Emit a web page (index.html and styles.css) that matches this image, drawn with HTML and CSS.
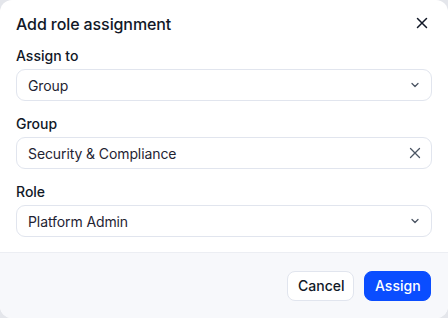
FILE: index.html
```html
<!DOCTYPE html>
<html lang="en">
<head>
  <meta charset="UTF-8" />
  <title>Add role assignment</title>
  <link rel="stylesheet" href="styles.css">
</head>
<body>

  <div class="dialog">
    <div class="dialog-body">
      <div class="dialog-header">
        <h2>Add role assignment</h2>
        <button class="icon-btn close" aria-label="Close">
          <svg width="12" height="12" viewBox="0 0 12 12"><path d="M1.5 1.5l9 9M10.5 1.5l-9 9" stroke="#111827" stroke-width="1.5" stroke-linecap="round"/></svg>
        </button>
      </div>

      <div class="field">
        <label>Assign to</label>
        <div class="control">
          <span>Group</span>
          <svg class="chev" width="12" height="12" viewBox="0 0 12 12"><path d="M3 4.5l3 3 3-3" fill="none" stroke="#4b5563" stroke-width="1.3" stroke-linecap="round" stroke-linejoin="round"/></svg>
        </div>
      </div>

      <div class="field">
        <label>Group</label>
        <div class="control">
          <span>Security &amp; Compliance</span>
          <svg class="clear" width="12" height="12" viewBox="0 0 12 12"><path d="M1.5 1.5l9 9M10.5 1.5l-9 9" stroke="#4b5563" stroke-width="1.3" stroke-linecap="round"/></svg>
        </div>
      </div>

      <div class="field">
        <label>Role</label>
        <div class="control">
          <span>Platform Admin</span>
          <svg class="chev" width="12" height="12" viewBox="0 0 12 12"><path d="M3 4.5l3 3 3-3" fill="none" stroke="#4b5563" stroke-width="1.3" stroke-linecap="round" stroke-linejoin="round"/></svg>
        </div>
      </div>
    </div>

    <div class="dialog-footer">
      <button class="btn btn-secondary">Cancel</button>
      <button class="btn btn-primary">Assign</button>
    </div>
  </div>

</body>
</html>
```

FILE: styles.css
```css
* {
  box-sizing: border-box;
}
body {
  margin: 0;
  background: #e4e6eb;
  font-family: Inter, "Noto Sans", sans-serif;
  color: #111827;
}
.dialog {
  width: 448px;
  height: 318px;
  background: white;
  border-radius: 12px;
  overflow: hidden;
  display: flex;
  flex-direction: column;
}
.dialog-body {
  flex: 1;
  padding: 12px 16px 0;
  display: flex;
  flex-direction: column;
  gap: 13px;
}
.dialog-header {
  display: flex;
  align-items: center;
  justify-content: space-between;
  height: 24px;
  margin-bottom: -3px;
}
.dialog-header h2 {
  margin: 0;
  font-size: 16px;
  font-weight: 500;
  line-height: 24px;
  letter-spacing: -0.1px;
}
.icon-btn {
  border: none;
  background: none;
  padding: 0;
  width: 18px;
  height: 18px;
  display: flex;
  align-items: center;
  justify-content: center;
  margin-right: 1px;
  margin-top: -2px;
}
.field {
  display: flex;
  flex-direction: column;
  gap: 3px;
}
.field label {
  font-size: 14px;
  font-weight: 500;
  line-height: 20px;
}
.control {
  height: 32px;
  border: 1px solid #e1e5ee;
  border-radius: 9px;
  padding: 0 10px 0 11px;
  display: flex;
  align-items: center;
  justify-content: space-between;
  font-size: 14px;
  letter-spacing: -0.1px;
  color: #1f2433;
}
.dialog-footer {
  height: 66px;
  background: #f7f8fb;
  border-top: 1px solid #eceef3;
  display: flex;
  justify-content: flex-end;
  align-items: center;
  gap: 10px;
  padding: 0 17px;
}
.btn {
  height: 30px;
  padding: 0 10px;
  border-radius: 8px;
  font-family: inherit;
  font-size: 14px;
  font-weight: 500;
  line-height: 20px;
}
.btn-secondary {
  background: white;
  border: 1px solid #e1e5ee;
  color: #111827;
  width: 67px;
}
.btn-primary {
  background: #0a4dff;
  border: 1px solid #0a4dff;
  color: white;
  width: 67px;
}
```
